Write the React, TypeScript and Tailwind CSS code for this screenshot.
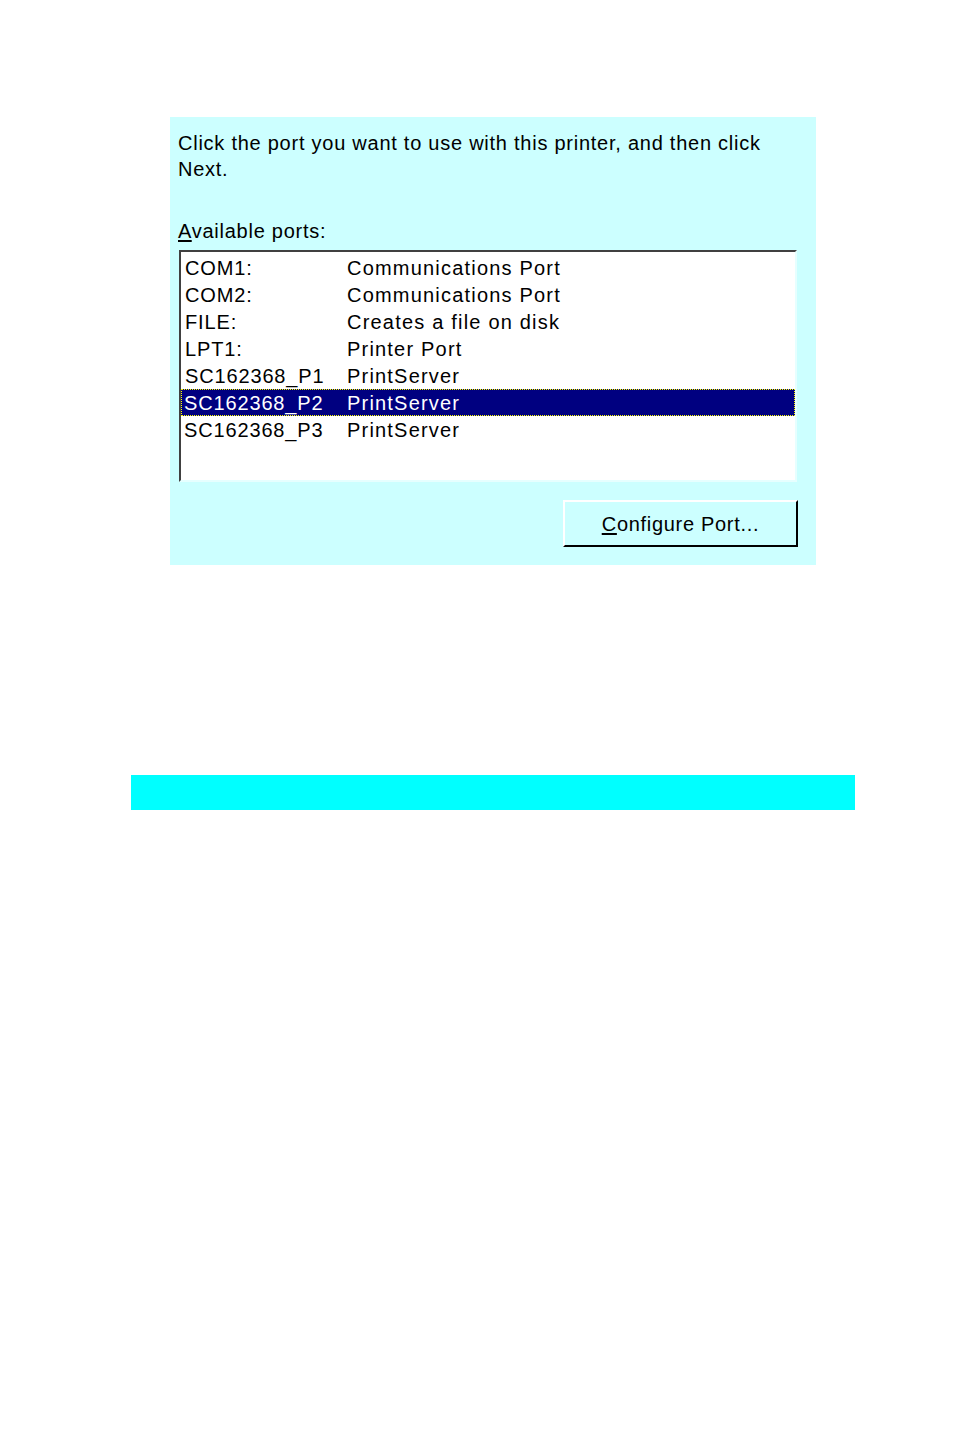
import React from "react";

const rows = [
  ["COM1:", "Communications Port"],
  ["COM2:", "Communications Port"],
  ["FILE:", "Creates a file on disk"],
  ["LPT1:", "Printer Port"],
  ["SC162368_P1", "PrintServer"],
  ["SC162368_P2", "PrintServer"],
  ["SC162368_P3", "PrintServer"],
];

export default function App() {
  return (
    <div className="w-[954px] h-[1431px] bg-white relative" style={{ fontFamily: '"Liberation Sans", Arial, sans-serif' }}>
      <div className="pt-[117px] pl-[170px]">
        <div className="w-[646px] h-[448px] bg-[#ccffff] pt-[13px] pl-[8px] text-[20px] leading-[26px] text-black tracking-[0.75px]">
          <div className="whitespace-nowrap">Click the port you want to use with this printer, and then click</div>
          <div>Next.</div>
          <div className="mt-[36px]">
            <span className="underline underline-offset-2">A</span>vailable ports:
          </div>
          <div className="mt-[6px] ml-[1px] w-[618px] h-[232px] border-t-2 border-l-2 border-t-[#404040] border-l-[#404040] border-b-2 border-r-2 border-b-[#e6ffff] border-r-[#e6ffff] bg-white">
            <div className="pt-[2px]">
              {rows.map(([a, b], i) => (
                <div
                  key={i}
                  className={
                    i === 5
                      ? "flex h-[27px] items-center bg-[#000080] text-white outline-1 outline-dotted outline-[#ffff00] -outline-offset-1"
                      : "flex h-[27px] items-center"
                  }
                >
                  <div className={i >= 5 ? "w-[166px] pl-[3px] tracking-[0.85px]" : "w-[166px] pl-[4px] tracking-[0.85px]"}>{a}</div>
                  <div className="tracking-[1.2px]">{b}</div>
                </div>
              ))}
            </div>
          </div>
          <div className="flex justify-end pr-[18px] mt-[18px]">
            <div className="w-[235px] h-[47px] border-t-2 border-l-2 border-t-white border-l-white border-b-2 border-r-2 border-b-black border-r-black flex items-center justify-center tracking-[0.7px]">
              <span>
                <span className="underline underline-offset-2">C</span>onfigure Port...
              </span>
            </div>
          </div>
        </div>
      </div>
      <div className="mt-[210px] ml-[131px] w-[724px] h-[35px] bg-[#00ffff]" />
    </div>
  );
}
